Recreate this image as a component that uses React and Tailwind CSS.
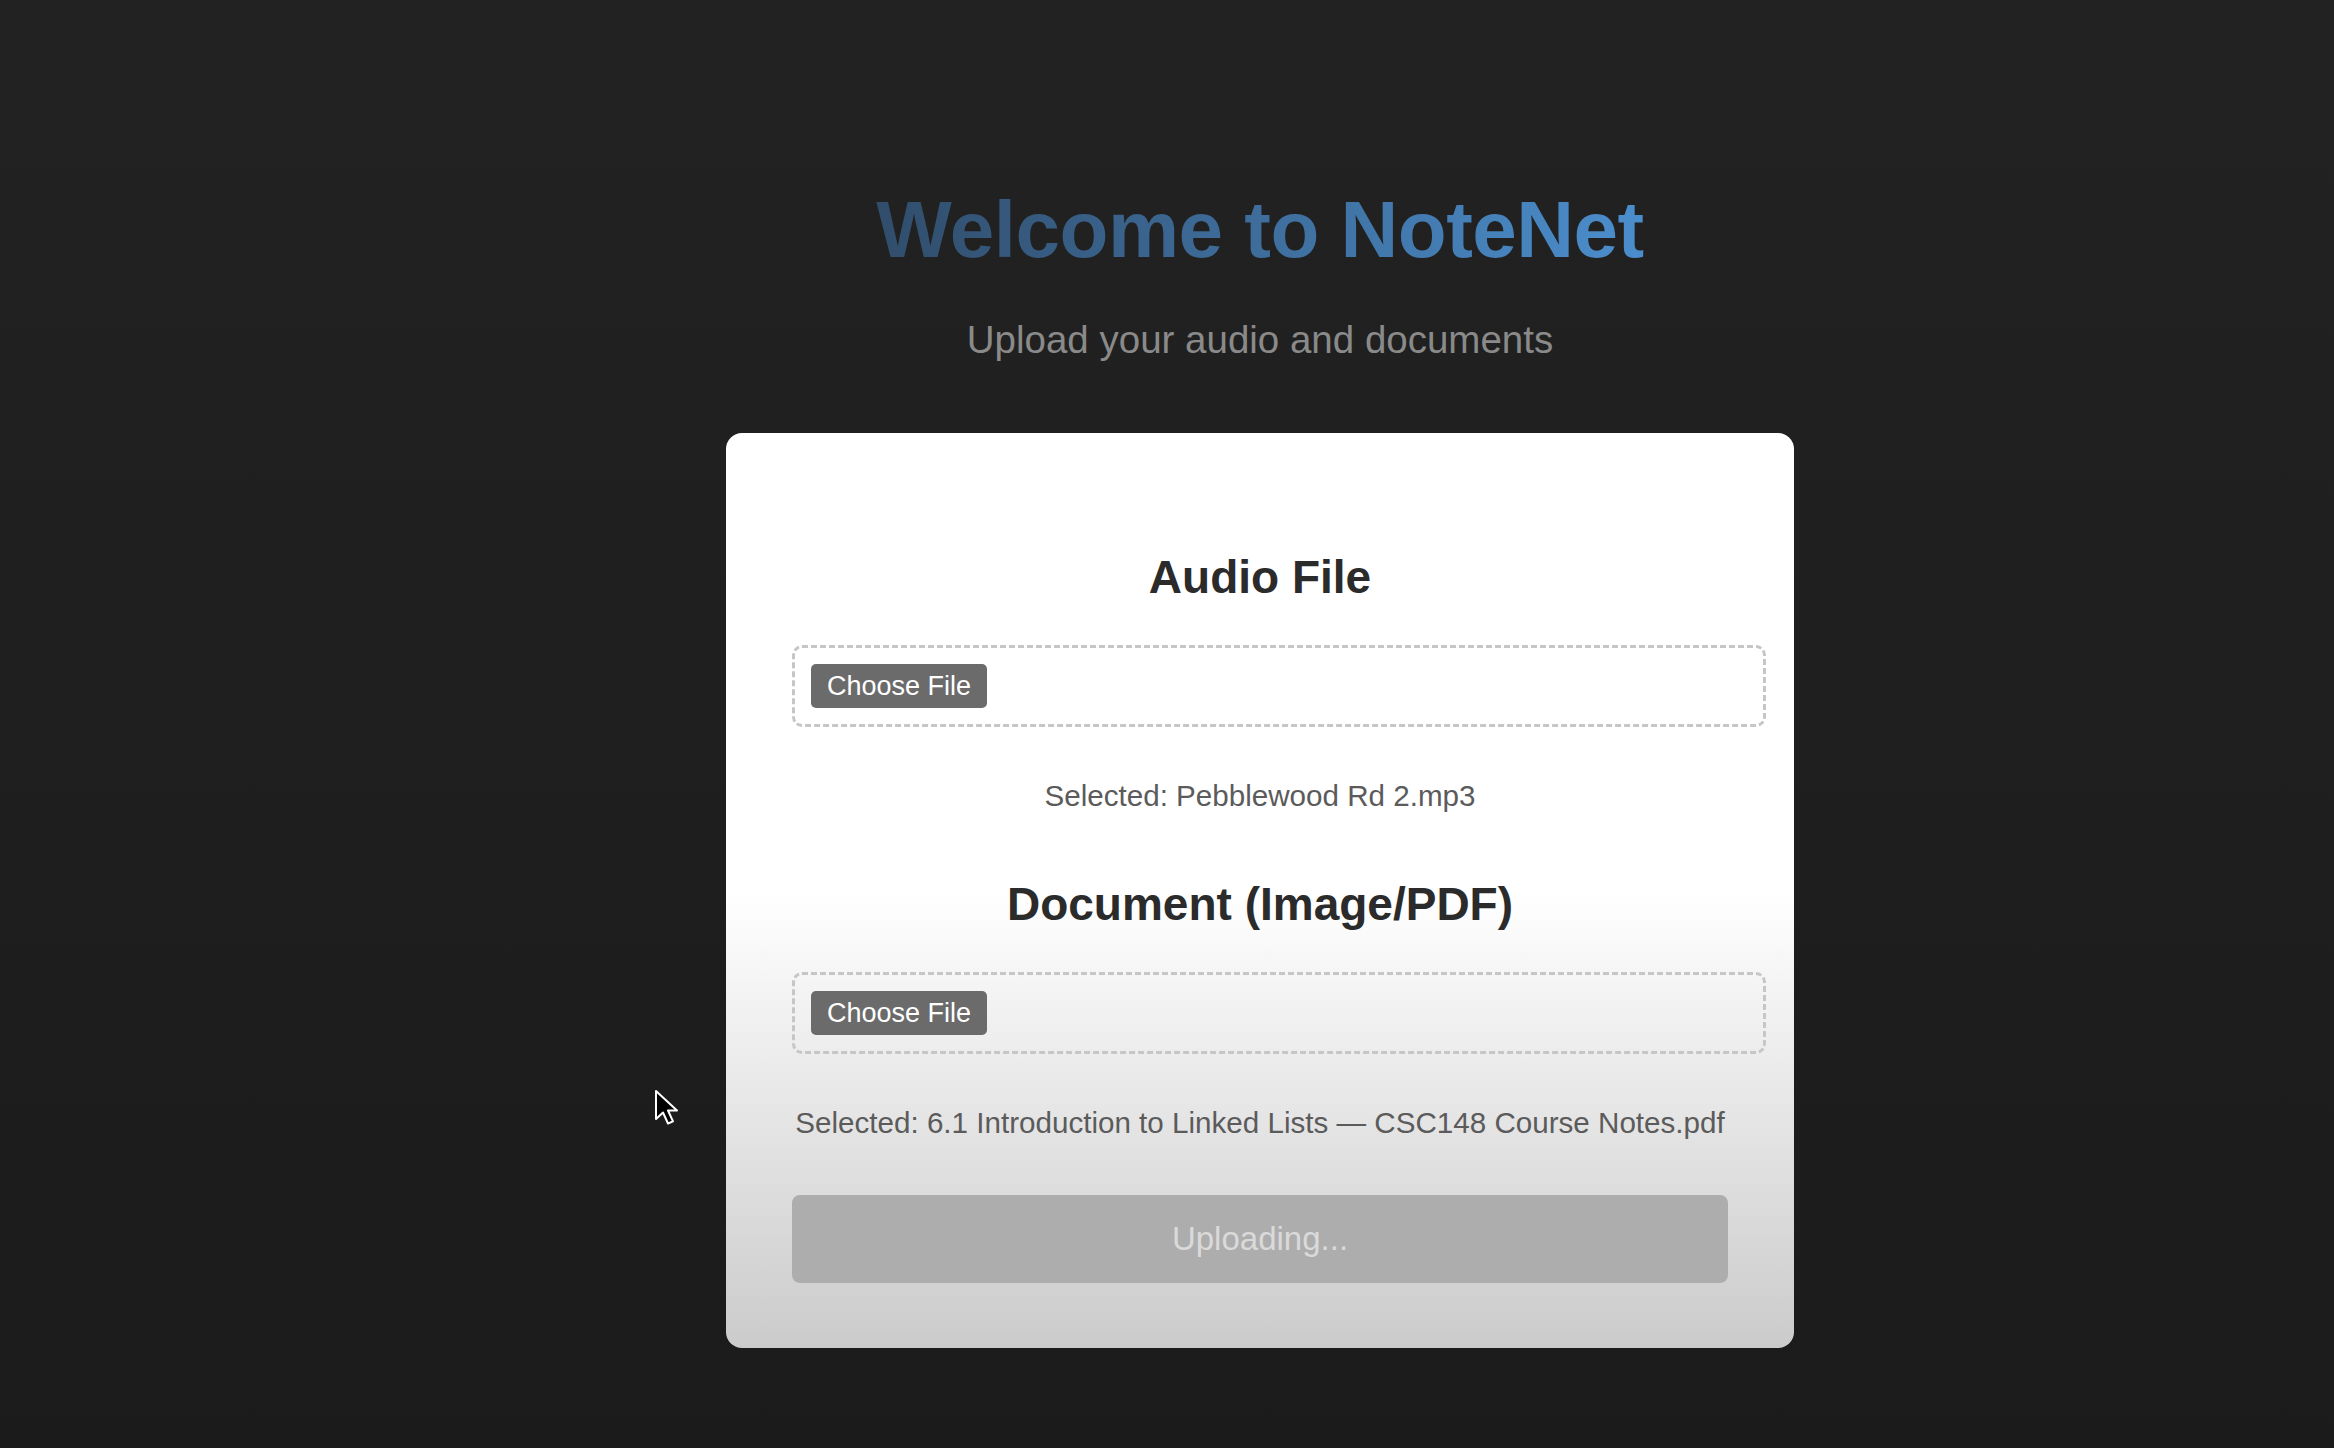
import React from 'react';

function FileDrop({ label, selected }) {
  return (
    <>
      <h2 className="text-center text-[46px] leading-[56px] font-bold text-[#2b2b2b]">{label}</h2>
      <div className="mt-[40px] w-[974px] border-[3px] border-dashed border-[#c6c6c6] rounded-[10px] p-[16px] flex">
        <button className="h-[44px] px-[16px] bg-[#6b6b6b] text-white text-[27px] leading-none rounded-[5px]">
          Choose File
        </button>
      </div>
      <p className="mt-[51px] text-center whitespace-nowrap text-[29.6px] leading-[36px] text-[#5b5b5b]">
        Selected: {selected}
      </p>
    </>
  );
}

export default function App() {
  return (
    <div
      className="relative min-h-screen bg-[linear-gradient(180deg,#222222,#1b1b1b)] pl-[186px] pt-[182px] pb-[100px] flex flex-col items-center"
      style={{ fontFamily: '"Liberation Sans", Arial, sans-serif' }}
    >
      <h1 className="text-[80px] leading-[96px] font-bold tracking-[-0.5px] bg-[linear-gradient(90deg,#314d6b,#4b8ecd)] bg-clip-text text-transparent">
        Welcome to NoteNet
      </h1>
      <p className="mt-[39px] text-[38.5px] leading-[46px] text-[#8a8a8a]">Upload your audio and documents</p>

      <div className="mt-[70px] w-[1068px] rounded-[16px] bg-[linear-gradient(180deg,#ffffff_50%,#cbcbcb_100%)] px-[66px] pt-[116px] pb-[65px]">
        <FileDrop label="Audio File" selected="Pebblewood Rd 2.mp3" />
        <div className="mt-[62px]">
          <FileDrop
            label="Document (Image/PDF)"
            selected="6.1 Introduction to Linked Lists — CSC148 Course Notes.pdf"
          />
        </div>
        <button className="mt-[54px] h-[88px] w-full rounded-[8px] bg-[#adadad] text-[#dadada] text-[33px]">
          Uploading...
        </button>
      </div>

      {/* mouse pointer */}
      <svg className="absolute left-[654px] top-[1089px]" width="26" height="38" viewBox="0 0 26 38">
        <path
          d="M2 2 L2 30 L9 23.5 L14 34.5 L19 32.3 L14 21.5 L23 21.5 Z"
          fill="#000"
          stroke="#fff"
          strokeWidth="2"
          strokeLinejoin="round"
        />
      </svg>
    </div>
  );
}
